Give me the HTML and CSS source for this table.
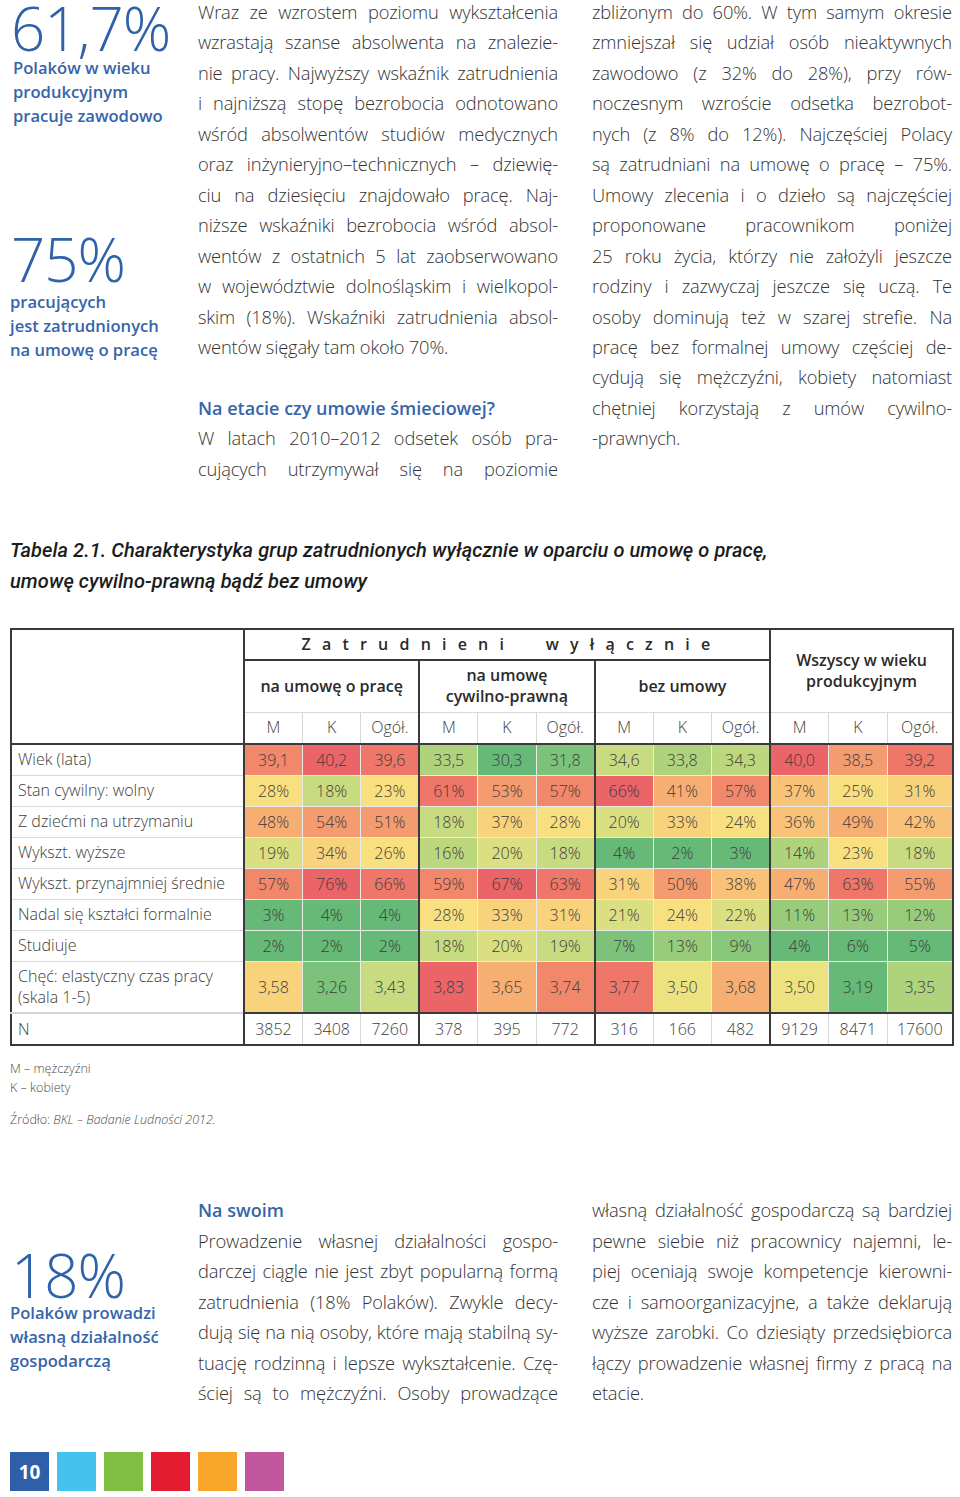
FILE: index.html
```html
<!DOCTYPE html>
<html lang="pl">
<head>
<meta charset="utf-8">
<title>Tabela 2.1</title>
<link rel="stylesheet" href="styles.css">
</head>
<body>
<div class="page">
  <section class="top">
    <aside class="stats">
      <div class="stat stat-a">
        <div class="big">61,7%</div>
        <div class="lbl">Polaków w wieku<br>produkcyjnym<br>pracuje zawodowo</div>
      </div>
      <div class="stat stat-b">
        <div class="big">75%</div>
        <div class="lbl">pracujących<br>jest zatrudnionych<br>na umowę o pracę</div>
      </div>
    </aside>
    <div class="col col-mid">
      <p class="txt">
        <span class="ln">Wraz ze wzrostem poziomu wykształcenia</span>
        <span class="ln">wzrastają szanse absolwenta na znalezie-</span>
        <span class="ln">nie pracy. Najwyższy wskaźnik zatrudnienia</span>
        <span class="ln">i najniższą stopę bezrobocia odnotowano</span>
        <span class="ln">wśród absolwentów studiów medycznych</span>
        <span class="ln">oraz inżynieryjno–technicznych – dziewię-</span>
        <span class="ln">ciu na dziesięciu znajdowało pracę. Naj-</span>
        <span class="ln">niższe wskaźniki bezrobocia wśród absol-</span>
        <span class="ln">wentów z ostatnich 5 lat zaobserwowano</span>
        <span class="ln">w województwie dolnośląskim i wielkopol-</span>
        <span class="ln">skim (18%). Wskaźniki zatrudnienia absol-</span>
        <span class="ln last">wentów sięgały tam około 70%.</span>
      </p>
      <h3 class="head gap">Na etacie czy umowie śmieciowej?</h3>
      <p class="txt">
        <span class="ln">W latach 2010–2012 odsetek osób pra-</span>
        <span class="ln">cujących utrzymywał się na poziomie</span>
      </p>
    </div>
    <div class="col">
      <p class="txt">
        <span class="ln">zbliżonym do 60%. W tym samym okresie</span>
        <span class="ln">zmniejszał się udział osób nieaktywnych</span>
        <span class="ln">zawodowo (z 32% do 28%), przy rów-</span>
        <span class="ln">noczesnym wzroście odsetka bezrobot-</span>
        <span class="ln">nych (z 8% do 12%). Najczęściej Polacy</span>
        <span class="ln">są zatrudniani na umowę o pracę – 75%.</span>
        <span class="ln">Umowy zlecenia i o dzieło są najczęściej</span>
        <span class="ln">proponowane pracownikom poniżej</span>
        <span class="ln">25 roku życia, którzy nie założyli jeszcze</span>
        <span class="ln">rodziny i zazwyczaj jeszcze się uczą. Te</span>
        <span class="ln">osoby dominują też w szarej strefie. Na</span>
        <span class="ln">pracę bez formalnej umowy częściej de-</span>
        <span class="ln">cydują się mężczyźni, kobiety natomiast</span>
        <span class="ln">chętniej korzystają z umów cywilno-</span>
        <span class="ln last">-prawnych.</span>
      </p>
    </div>
  </section>

  <h2 class="caption">Tabela 2.1. Charakterystyka grup zatrudnionych wyłącznie w oparciu o umowę o pracę,<br>umowę cywilno-prawną bądź bez umowy</h2>

  <table class="tbl">
    <colgroup>
      <col class="c-label">
      <col class="c-n"><col class="c-n"><col class="c-n">
      <col class="c-n"><col class="c-n"><col class="c-n">
      <col class="c-n"><col class="c-n"><col class="c-n">
      <col class="c-a"><col class="c-a"><col class="c-b">
    </colgroup>
    <thead>
      <tr class="h1">
        <th class="corner" rowspan="3"></th>
        <th class="spaced gl dk-b" colspan="9">Zatrudnieni&nbsp; wyłącznie</th>
        <th class="grp gl" colspan="3" rowspan="2">Wszyscy w wieku<br>produkcyjnym</th>
      </tr>
      <tr class="h2">
        <th class="grp gl" colspan="3">na umowę o pracę</th>
        <th class="grp gl" colspan="3">na umowę<br>cywilno-prawną</th>
        <th class="grp gl" colspan="3">bez umowy</th>
      </tr>
      <tr class="h3">
        <th class="gl">M</th><th>K</th><th>Ogół.</th>
        <th class="gl">M</th><th>K</th><th>Ogół.</th>
        <th class="gl">M</th><th>K</th><th>Ogół.</th>
        <th class="gl">M</th><th>K</th><th>Ogół.</th>
      </tr>
    </thead>
    <tbody>
      <tr class="r">
        <td class="lab">Wiek (lata)</td>
        <td class="gl r3">39,1</td><td class="r1">40,2</td><td class="r2">39,6</td>
        <td class="gl lg1">33,5</td><td class="g2">30,3</td><td class="g1">31,8</td>
        <td class="gl yg2">34,6</td><td class="lg1">33,8</td><td class="lg0">34,3</td>
        <td class="gl r1">40,0</td><td class="o1">38,5</td><td class="r2">39,2</td>
      </tr>
      <tr class="r">
        <td class="lab">Stan cywilny: wolny</td>
        <td class="gl y1">28%</td><td class="yg2">18%</td><td class="y1">23%</td>
        <td class="gl r2">61%</td><td class="o1">53%</td><td class="r3">57%</td>
        <td class="gl r1">66%</td><td class="o2">41%</td><td class="r3">57%</td>
        <td class="gl o3">37%</td><td class="y1">25%</td><td class="y0">31%</td>
      </tr>
      <tr class="r">
        <td class="lab">Z dziećmi na utrzymaniu</td>
        <td class="gl o2">48%</td><td class="o1">54%</td><td class="o1">51%</td>
        <td class="gl yg2">18%</td><td class="y0">37%</td><td class="y1">28%</td>
        <td class="gl yg1">20%</td><td class="y0">33%</td><td class="y1">24%</td>
        <td class="gl o3">36%</td><td class="o2">49%</td><td class="o3">42%</td>
      </tr>
      <tr class="r">
        <td class="lab">Wykszt. wyższe</td>
        <td class="gl yg1">19%</td><td class="y0">34%</td><td class="y1">26%</td>
        <td class="gl lg0">16%</td><td class="yg1">20%</td><td class="yg2">18%</td>
        <td class="gl g2">4%</td><td class="g2">2%</td><td class="g2">3%</td>
        <td class="gl lg1">14%</td><td class="y1">23%</td><td class="yg2">18%</td>
      </tr>
      <tr class="r">
        <td class="lab">Wykszt. przynajmniej średnie</td>
        <td class="gl r3">57%</td><td class="r1">76%</td><td class="r2">66%</td>
        <td class="gl r3">59%</td><td class="r1">67%</td><td class="r2">63%</td>
        <td class="gl y0">31%</td><td class="o1">50%</td><td class="o3">38%</td>
        <td class="gl o2">47%</td><td class="r2">63%</td><td class="o1">55%</td>
      </tr>
      <tr class="r">
        <td class="lab">Nadal się kształci formalnie</td>
        <td class="gl g2">3%</td><td class="g2">4%</td><td class="g2">4%</td>
        <td class="gl y1">28%</td><td class="y0">33%</td><td class="y0">31%</td>
        <td class="gl yg1">21%</td><td class="y1">24%</td><td class="yg1">22%</td>
        <td class="gl lg2">11%</td><td class="lg2">13%</td><td class="lg2">12%</td>
      </tr>
      <tr class="r">
        <td class="lab">Studiuje</td>
        <td class="gl g2">2%</td><td class="g2">2%</td><td class="g2">2%</td>
        <td class="gl yg2">18%</td><td class="yg1">20%</td><td class="yg2">19%</td>
        <td class="gl g1">7%</td><td class="lg2">13%</td><td class="g0">9%</td>
        <td class="gl g2">4%</td><td class="g2">6%</td><td class="g2">5%</td>
      </tr>
      <tr class="r tall">
        <td class="lab">Chęć: elastyczny czas pracy<br>(skala 1-5)</td>
        <td class="gl y0">3,58</td><td class="g1">3,26</td><td class="yg2">3,43</td>
        <td class="gl r1">3,83</td><td class="o2">3,65</td><td class="r3">3,74</td>
        <td class="gl r2">3,77</td><td class="y2">3,50</td><td class="o2">3,68</td>
        <td class="gl y2">3,50</td><td class="g2">3,19</td><td class="lg1">3,35</td>
      </tr>
      <tr class="r nrow">
        <td class="lab">N</td>
        <td class="gl">3852</td><td>3408</td><td>7260</td>
        <td class="gl">378</td><td>395</td><td>772</td>
        <td class="gl">316</td><td>166</td><td>482</td>
        <td class="gl">9129</td><td>8471</td><td>17600</td>
      </tr>
    </tbody>
  </table>

  <div class="notes">
    <p class="legend">M – mężczyźni<br>K – kobiety</p>
    <p class="source">Źródło: <em>BKL – Badanie Ludności 2012.</em></p>
  </div>

  <section class="bottom">
    <aside class="stats">
      <div class="stat stat-c">
        <div class="big">18%</div>
        <div class="lbl">Polaków prowadzi<br>własną działalność<br>gospodarczą</div>
      </div>
    </aside>
    <div class="col col-mid">
      <h3 class="head">Na swoim</h3>
      <p class="txt">
        <span class="ln">Prowadzenie własnej działalności gospo-</span>
        <span class="ln">darczej ciągle nie jest zbyt popularną formą</span>
        <span class="ln">zatrudnienia (18% Polaków). Zwykle decy-</span>
        <span class="ln">dują się na nią osoby, które mają stabilną sy-</span>
        <span class="ln">tuację rodzinną i lepsze wykształcenie. Czę-</span>
        <span class="ln">ściej są to mężczyźni. Osoby prowadzące</span>
      </p>
    </div>
    <div class="col">
      <p class="txt">
        <span class="ln">własną działalność gospodarczą są bardziej</span>
        <span class="ln">pewne siebie niż pracownicy najemni, le-</span>
        <span class="ln">piej oceniają swoje kompetencje kierowni-</span>
        <span class="ln">cze i samoorganizacyjne, a także deklarują</span>
        <span class="ln">wyższe zarobki. Co dziesiąty przedsiębiorca</span>
        <span class="ln">łączy prowadzenie własnej firmy z pracą na</span>
        <span class="ln last">etacie.</span>
      </p>
    </div>
  </section>

  <footer class="squares">
    <span class="sq sq-blue">10</span>
    <span class="sq sq-cyan"></span>
    <span class="sq sq-green"></span>
    <span class="sq sq-red"></span>
    <span class="sq sq-orange"></span>
    <span class="sq sq-pink"></span>
  </footer>
</div>
</body>
</html>
```

FILE: styles.css
```css
* { box-sizing: border-box; }
html, body { margin: 0; padding: 0; background: #fff; }
body {
  font-family: "Open Sans", "Noto Sans", sans-serif;
  color: #333;
}
.page {
  width: 960px;
  height: 1497px;
  padding-left: 10px;
  overflow: hidden;
}

/* ---------- text columns ---------- */
.top, .bottom {
  display: grid;
  grid-template-columns: 188px 394px 360px;
}
.top { margin-top: -3px; }
.col-mid { padding-right: 34px; }
.txt { margin: 0; }
.ln {
  display: block;
  font-size: 18.3px;
  font-weight: 300;
  line-height: 30.45px;
  letter-spacing: -0.15px;
  text-align: justify;
  text-align-last: justify;
  color: #333;
  white-space: nowrap;
}
.ln.last { text-align-last: left; }
.head {
  margin: 0;
  font-size: 18px;
  font-weight: 600;
  line-height: 30.45px;
  color: #3565aa;
}
.head.gap { margin-top: 30.45px; }

/* ---------- stats ---------- */
.stats { padding-top: 3px; }
.stat .big {
  font-size: 60px;
  font-weight: 300;
  line-height: 56px;
  color: #2f62a8;
  letter-spacing: -1px;
}
.stat .lbl {
  font-size: 16.6px;
  font-weight: 600;
  line-height: 24px;
  color: #3565aa;
}
.stat-a .big { margin-left: 1px; }
.stat-a .lbl { margin-left: 3px; margin-top: 0; }
.stat-b { margin-top: 103px; }
.stat-b .big { margin-left: 1px; }
.stat-b .lbl { margin-top: 3px; }
.stat-c { margin-top: 49px; }
.stat-c .big { margin-left: 1px; }
.stat-c .lbl { margin-top: -2px; }

/* ---------- caption ---------- */
.caption {
  margin: 51px 0 0 0;
  font-family: Roboto, "Open Sans", sans-serif;
  font-style: italic;
  font-weight: 500;
  font-size: 20px;
  line-height: 31px;
  letter-spacing: 0.07px;
  color: #1c1c1c;
}

/* ---------- table ---------- */
.tbl {
  margin-top: 31px;
  border-collapse: collapse;
  table-layout: fixed;
  width: 943px;
  border: 2px solid #3a3a3a;
  font-size: 16px;
  font-weight: 300;
  color: #3d3d3d;
}
.c-label { width: 233px; }
.c-n { width: 58.44px; }
.c-a { width: 58.5px; }
.c-b { width: 66px; }
.tbl th, .tbl td {
  border: 1px solid #d8d8d8;
  padding: 0;
  text-align: center;
  vertical-align: middle;
}
.tbl th { font-weight: 600; color: #2a2a2a; font-size: 16px; line-height: 21px; }
.tbl .h3 th { font-weight: 300; color: #3d3d3d; }
.tbl .gl { border-left: 2px solid #3a3a3a; }
.tbl .dk-b { border-bottom: 2px solid #3a3a3a; }
.tbl .corner { border-bottom: 2px solid #3a3a3a; }
.tbl .h3 th { border-bottom: 2px solid #3a3a3a; }
.h1 { height: 31px; }
.h2 { height: 52px; }
.h3 { height: 32px; }
.r { height: 31px; }
.r.tall { height: 52px; }
.r.nrow { height: 32px; }
.r.nrow td { border-top: 2px solid #3a3a3a; }
.spaced {
  letter-spacing: 11.2px;
  font-size: 16px;
  padding-left: 9px !important;
}
.grp { line-height: 21px; }
.tbl td { border-color: #e9ece6; }
.tbl td.lab {
  text-align: left;
  padding-left: 6px;
  line-height: 21px;
  border-color: #d8d8d8;
}
.tbl td.gl { border-left: 2px solid #3a3a3a; }
.nrow td { border-color: #d8d8d8; }

/* heat-map scale */
.r1 { background: #ea6468; }
.r2 { background: #ee7769; }
.r3 { background: #f1886b; }
.o1 { background: #f49b70; }
.o2 { background: #f6ae73; }
.o3 { background: #f8c278; }
.y0 { background: #f9d27c; }
.y1 { background: #f8df80; }
.y2 { background: #ece280; }
.yg1 { background: #dadf81; }
.yg2 { background: #c9db80; }
.lg0 { background: #bdd77e; }
.lg1 { background: #aed37c; }
.lg2 { background: #98cc7b; }
.g0 { background: #89c77a; }
.g1 { background: #7cc27a; }
.g2 { background: #66b977; }

/* ---------- notes ---------- */
.notes { margin-top: 13px; color: #4a4a4a; font-size: 12.5px; font-weight: 300; }
.legend { margin: 0; line-height: 19px; }
.source { margin: 13px 0 0 0; line-height: 19px; }
.source em { font-style: italic; }

/* ---------- bottom ---------- */
.bottom { margin-top: 66px; }

/* ---------- squares ---------- */
.squares {
  display: flex;
  gap: 8px;
  margin-top: 44px;
}
.sq {
  display: flex;
  align-items: center;
  justify-content: center;
  width: 39px;
  height: 39px;
  color: #fff;
  font-weight: 700;
  font-size: 19px;
}
.sq-blue { background: #2f5fa8; }
.sq-cyan { background: #45c2ee; }
.sq-green { background: #80be43; }
.sq-red { background: #e31c2f; }
.sq-orange { background: #f8a72a; }
.sq-pink { background: #c1579c; }
```
